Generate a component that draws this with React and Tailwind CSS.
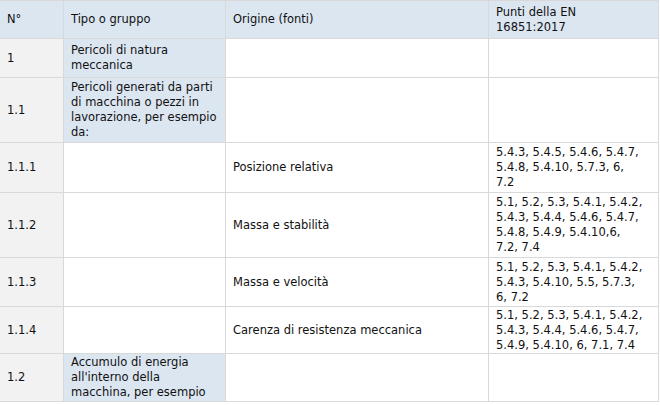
import React from "react";

const rows = [
  { h: "h-[38px]", header: true, c: [["N°"], ["Tipo o gruppo"], ["Origine (fonti)"], ["Punti della EN", "16851:2017"]] },
  { h: "h-[39px]", blue: true, c: [["1"], ["Pericoli di natura", "meccanica"], [], []] },
  { h: "h-[65px]", blue: true, c: [["1.1"], ["Pericoli generati da parti", "di macchina o pezzi in", "lavorazione, per esempio", "da:"], [], []] },
  { h: "h-[50px]", c: [["1.1.1"], [], ["Posizione relativa"], ["5.4.3, 5.4.5, 5.4.6, 5.4.7,", "5.4.8, 5.4.10, 5.7.3, 6,", "7.2"]] },
  { h: "h-[65px]", c: [["1.1.2"], [], ["Massa e stabilità"], ["5.1, 5.2, 5.3, 5.4.1, 5.4.2,", "5.4.3, 5.4.4, 5.4.6, 5.4.7,", "5.4.8, 5.4.9, 5.4.10,6,", "7.2, 7.4"]] },
  { h: "h-[49px]", c: [["1.1.3"], [], ["Massa e velocità"], ["5.1, 5.2, 5.3, 5.4.1, 5.4.2,", "5.4.3, 5.4.10, 5.5, 5.7.3,", "6, 7.2"]] },
  { h: "h-[47px]", c: [["1.1.4"], [], ["Carenza di resistenza meccanica"], ["5.1, 5.2, 5.3, 5.4.1, 5.4.2,", "5.4.3, 5.4.4, 5.4.6, 5.4.7,", "5.4.9, 5.4.10, 6, 7.1, 7.4"]] },
  { h: "h-[48px]", blue: true, c: [["1.2"], ["Accumulo di energia", "all'interno della", "macchina, per esempio"], [], []] },
];

const widths = ["w-[64px]", "w-[162px]", "w-[263px]", "w-[170px]"];

function Cell({ lines, w, bg }) {
  return (
    <div className={`${w} ${bg} h-full shrink-0 border-r border-[#d9d9d9] flex flex-col justify-center px-[7px]`}>
      {lines.map((l, i) => (
        <div key={i} className="whitespace-nowrap">{l}</div>
      ))}
    </div>
  );
}

export default function App() {
  return (
    <div className="w-[660px] h-[405px] bg-white overflow-hidden">
      <div className="w-[659px] h-[402px] overflow-hidden border-t border-b border-[#d9d9d9] font-['DejaVu_Sans',sans-serif] text-[11.5px] leading-[15px] text-[#111]">
        {rows.map((r, i) => (
          <div key={i} className={`flex ${r.h} border-b border-[#d9d9d9]`}>
            {r.c.map((lines, j) => {
              let bg = "bg-white";
              if (r.header) bg = "bg-[#dce6f1]";
              else if (j === 0) bg = "bg-[#f2f2f2]";
              else if (j === 1 && r.blue) bg = "bg-[#dce6f1]";
              return <Cell key={j} lines={lines} w={widths[j]} bg={bg} />;
            })}
          </div>
        ))}
      </div>
    </div>
  );
}
